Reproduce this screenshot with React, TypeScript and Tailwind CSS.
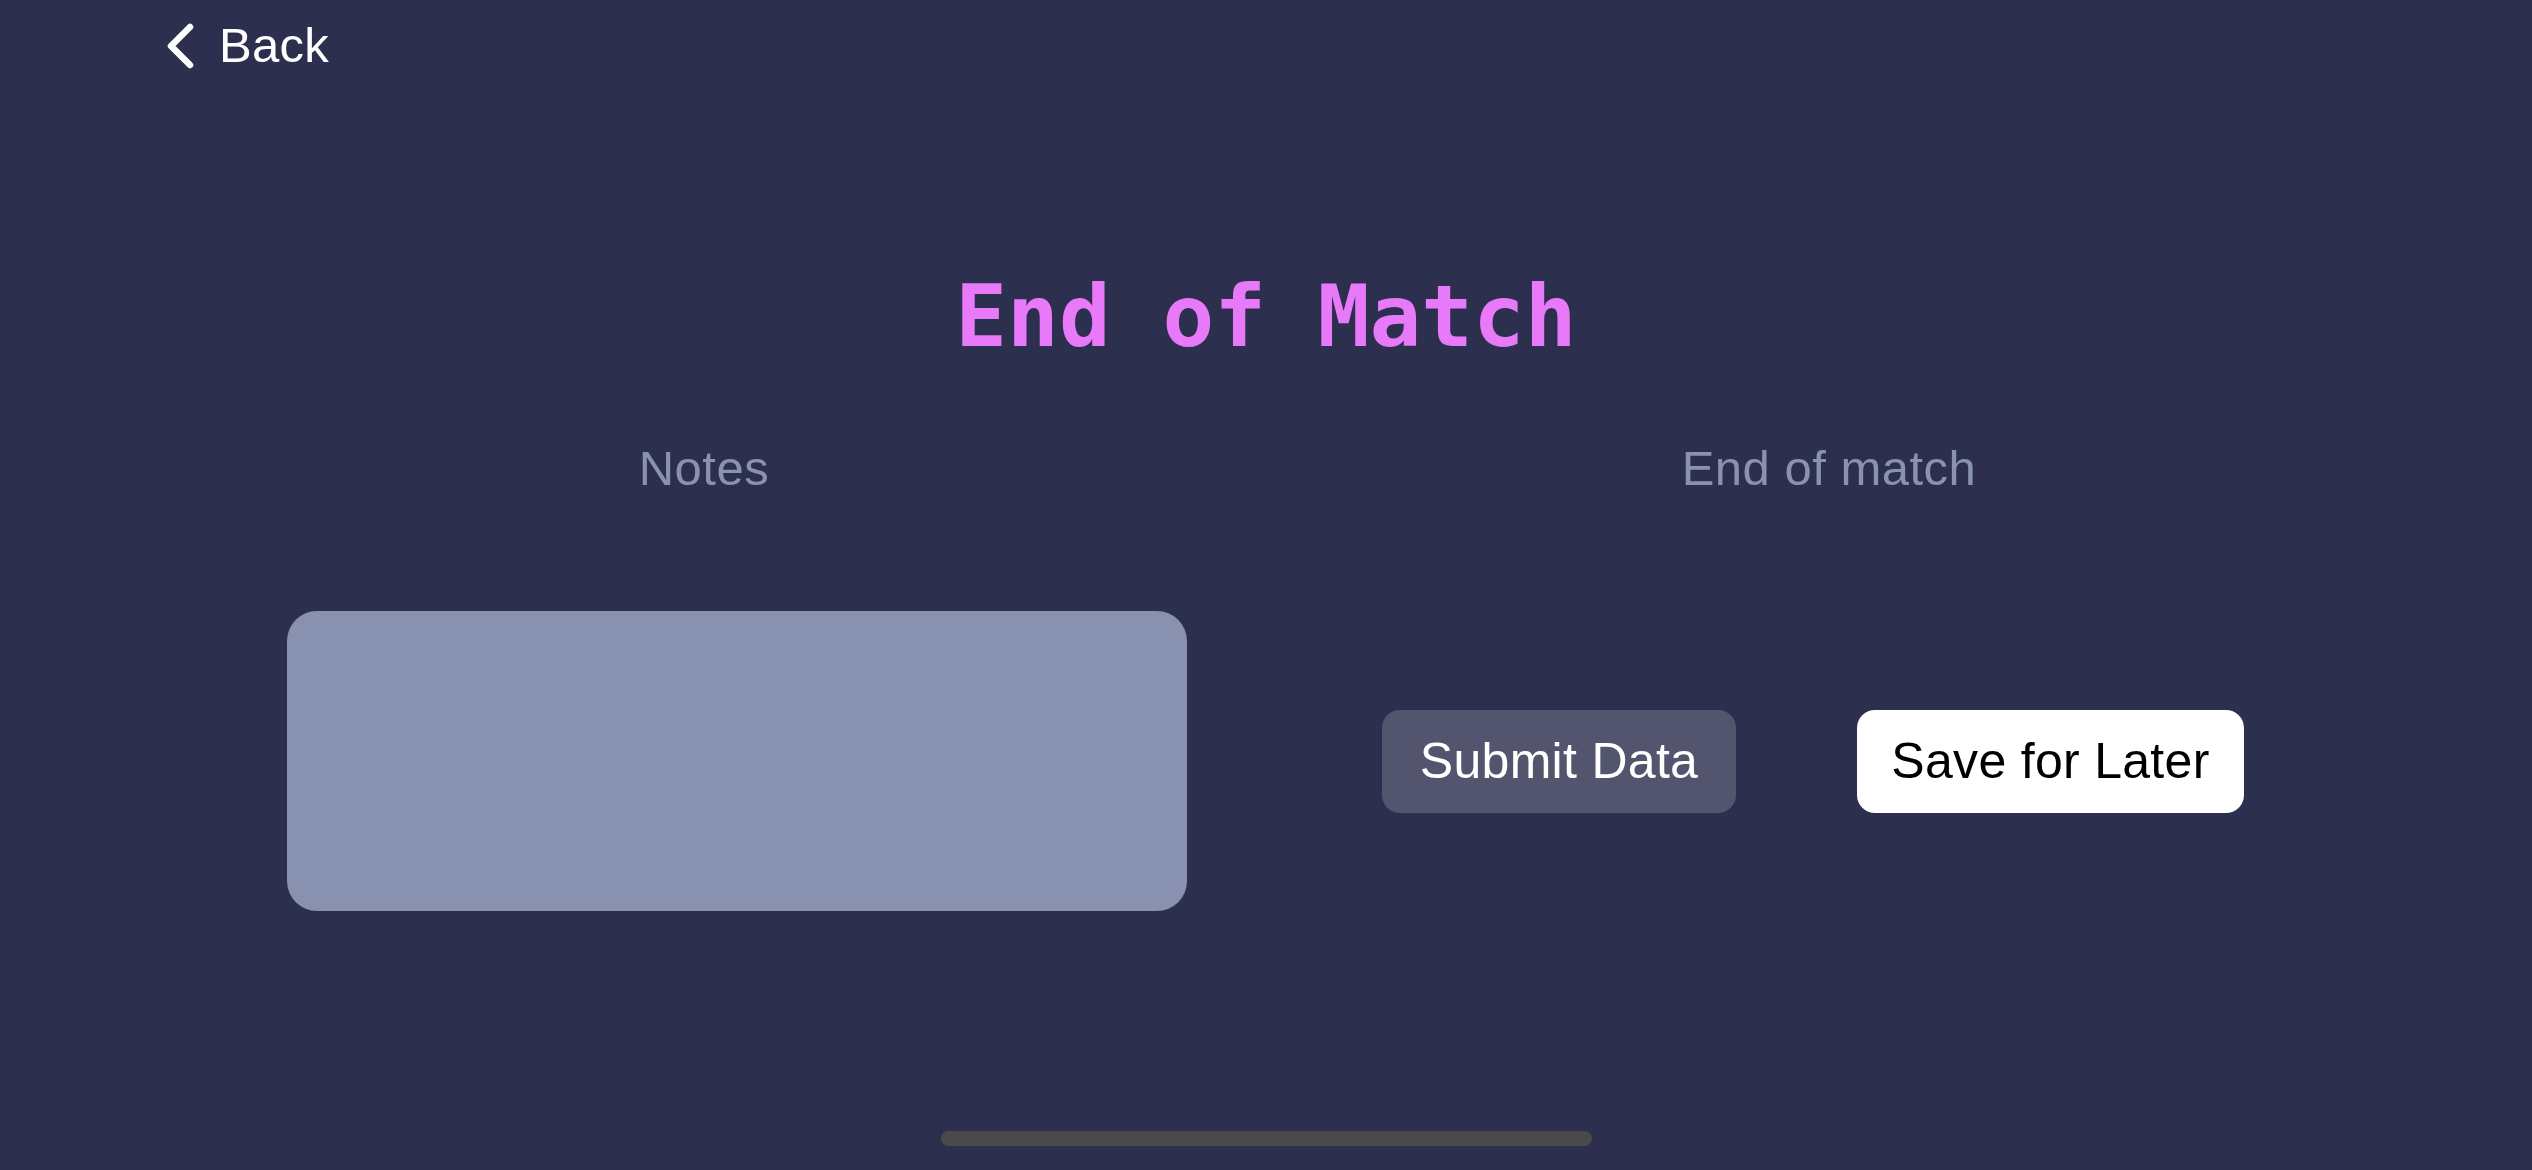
import { FC, useState } from 'react';

const sans = { fontFamily: '"Liberation Sans", Arial, sans-serif' };

const BackChevron: FC = () => (
  <svg width="30" height="50" viewBox="0 0 30 50" fill="none">
    <polyline
      points="25,6 6,25 25,44"
      stroke="#ffffff"
      strokeWidth="6.5"
      strokeLinecap="round"
      strokeLinejoin="round"
    />
  </svg>
);

const App: FC = () => {
  const [notes, setNotes] = useState('');

  return (
    <div
      className="w-[2532px] h-[1170px] bg-[#2d2f4f] flex flex-col overflow-hidden"
      style={sans}
    >
      {/* nav bar */}
      <div className="pt-[21px] pl-[165px] flex items-center gap-[24px] h-[70px]">
        <BackChevron />
        <span className="text-white text-[49px] leading-[49px] tracking-[0.3px]">Back</span>
      </div>

      <h1 className="mt-[203px] text-center text-[86px] leading-none font-bold text-[#e879f9] font-['DejaVu_Sans_Mono',monospace]">
        End of Match
      </h1>

      <div className="mt-[85px] pl-[287px] flex gap-[195px]">
        {/* notes column */}
        <div className="w-[900px] flex flex-col">
          <div className="pr-[66px] text-center text-[49px] leading-none tracking-[0.5px] text-[#8a92b2]">
            Notes
          </div>
          <textarea
            value={notes}
            onChange={(e) => setNotes(e.target.value)}
            className="mt-[118px] w-[900px] h-[300px] rounded-[30px] bg-[#8891af] resize-none outline-none p-6 text-[40px] text-white"
          />
        </div>

        {/* actions column */}
        <div className="w-[862px] flex flex-col">
          <div className="pl-[32px] text-center text-[49px] leading-none tracking-[0.5px] text-[#8a92b2]">
            End of match
          </div>
          <div className="mt-[118px] h-[300px] flex items-center gap-[121px]">
            <button className="w-[354px] h-[103px] rounded-[18px] bg-[#53556f] text-white text-[50px] leading-none tracking-[0.3px]">
              Submit Data
            </button>
            <button className="w-[387px] h-[103px] rounded-[18px] bg-white text-black text-[50px] leading-none tracking-[0.3px]">
              Save for Later
            </button>
          </div>
        </div>
      </div>

      {/* home indicator */}
      <div className="mt-auto mb-[24px] self-center w-[651px] h-[15px] rounded-full bg-[#4a4a4a]" />
    </div>
  );
};

export default App;
